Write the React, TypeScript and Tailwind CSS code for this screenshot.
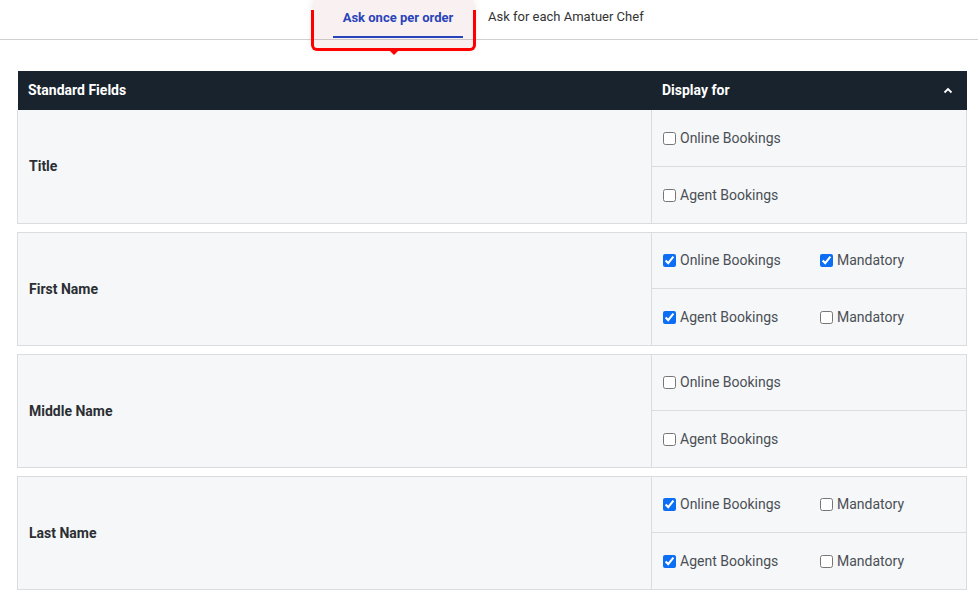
import React from "react";

type Row = { label: string; online: boolean; agent: boolean; onlineMand?: boolean; agentMand?: boolean };

const rows: Row[] = [
  { label: "Title", online: false, agent: false },
  { label: "First Name", online: true, agent: true, onlineMand: true, agentMand: false },
  { label: "Middle Name", online: false, agent: false },
  { label: "Last Name", online: true, agent: true, onlineMand: false, agentMand: false },
];

function Check({ checked, label }: { checked: boolean; label: string }) {
  return (
    <label className="flex items-center gap-[4px] text-[14px] text-[#4a4f55]">
      <input
        type="checkbox"
        defaultChecked={checked}
        className="m-0 h-[13px] w-[13px] accent-[#0b6ef5]"
      />
      <span>{label}</span>
    </label>
  );
}

function Cell({ checked, label, mand, h }: { checked: boolean; label: string; mand?: boolean; h: string }) {
  return (
    <div className={`flex ${h} items-center pl-[11px]`}>
      <div className="w-[157px]">
        <Check checked={checked} label={label} />
      </div>
      {mand !== undefined && <Check checked={mand} label="Mandatory" />}
    </div>
  );
}

export default function App() {
  return (
    <div
      className="relative h-[594px] w-[978px] overflow-hidden bg-white"
      style={{ fontFamily: "Roboto, 'Liberation Sans', sans-serif" }}
    >
      {/* Tabs */}
      <div className="flex h-[40px] border-b border-[#d0d0d0]">
        <div className="ml-[333px] flex h-full w-[130px] flex-col items-center">
          <div className="flex flex-1 items-center pt-[1px] pb-[2px] text-[13px] font-bold text-[#1f47c6]">
            Ask once per order
          </div>
          <div className="h-[2px] w-full bg-[#1f47c6]" />
          <div className="h-[1px]" />
        </div>
        <div className="ml-[25px] flex items-center pb-[5px] text-[13px] text-[#333]">
          Ask for each Amatuer Chef
        </div>
      </div>

      {/* Annotation highlight */}
      <div className="pointer-events-none absolute left-[314px] top-0 h-[48px] w-[159px] bg-[#a0202010] shadow-[0_0_8px_rgba(120,0,0,0.15)]" />
      <div className="pointer-events-none absolute left-[311px] top-[10px] h-[41px] w-[165px] rounded-b-[6px] border-[3px] border-t-0 border-[#ff0000]" />
      <div className="pointer-events-none absolute left-[389px] top-[50px] h-0 w-0 border-l-[5px] border-r-[5px] border-t-[5px] border-l-transparent border-r-transparent border-t-[#ff0000]" />

      {/* Table */}
      <div className="ml-[18px] mt-[31px] w-[949px]">
        <div className="flex h-[39px] items-center bg-[#19232e] text-[14px] font-bold text-white">
          <div className="w-[633px] pl-[10px]">Standard Fields</div>
          <div className="flex flex-1 items-center justify-between pl-[11px] pr-[14px]">
            <span>Display for</span>
            <svg width="10" height="7" viewBox="0 0 10 7" fill="none">
              <path d="M1.5 5.5 L5 2 L8.5 5.5" stroke="white" strokeWidth="1.8" />
            </svg>
          </div>
        </div>
        <div className="flex flex-col gap-[8px]">
          {rows.map((r, i) => (
            <div
              key={r.label}
              className={`-ml-px flex border border-[#dadde0] bg-[#f6f7f9] ${i === 0 ? "border-t-0" : ""}`}
            >
              <div className="flex w-[633px] items-center pl-[11px] text-[14px] font-bold text-[#2b2f33]">
                {r.label}
              </div>
              <div className="flex flex-1 flex-col border-l border-[#dadde0]">
                <Cell h={i === 0 ? "h-[56px]" : "h-[55px]"} checked={r.online} label="Online Bookings" mand={r.onlineMand} />
                <div className="h-px bg-[#dadde0]" />
                <Cell h="h-[56px]" checked={r.agent} label="Agent Bookings" mand={r.agentMand} />
              </div>
            </div>
          ))}
        </div>
      </div>
    </div>
  );
}
